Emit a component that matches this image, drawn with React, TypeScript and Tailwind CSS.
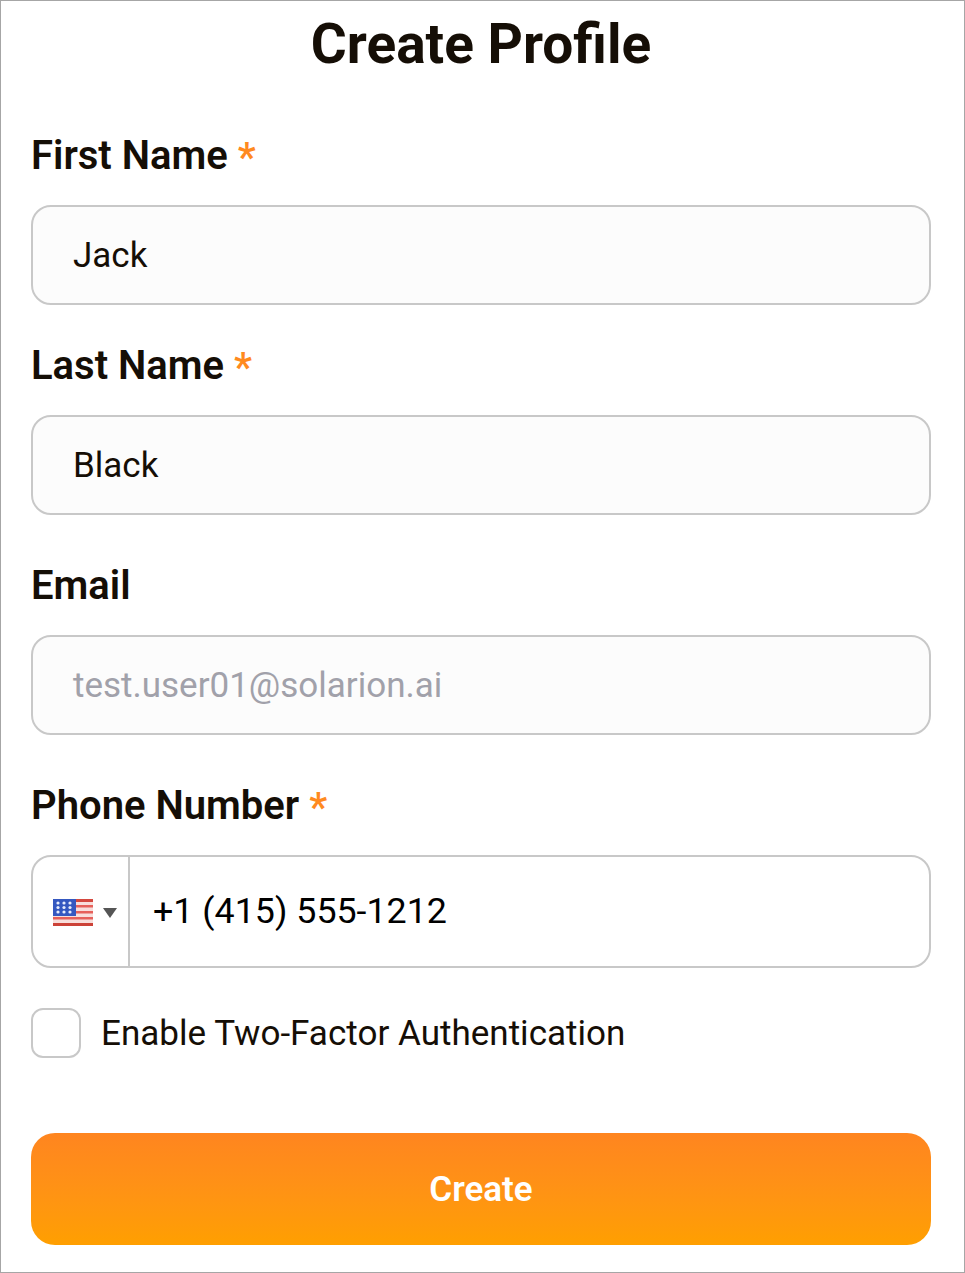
const Label = ({ text, required }: { text: string; required?: boolean }) => (
  <div className="flex h-[60px] items-center pt-[2px] text-[40px] font-semibold leading-[60px] text-[#150e06]">
    {text}
    {required && <span className="ml-[10px] mt-[4px] text-[#ff8a1f]">*</span>}
  </div>
)

const TextInput = ({ value, disabled }: { value: string; disabled?: boolean }) => (
  <div
    className={`mt-[20px] flex h-[100px] items-center rounded-[20px] border-2 border-[#c8c8c8] bg-[#fcfcfc] pl-[40px] pt-[2px] text-[35px] ${
      disabled ? 'text-[#a1a1aa]' : 'text-[#150e06]'
    }`}
  >
    {value}
  </div>
)

// low-res looking US flag, blurred like the bitmap in the picture
const UsFlag = () => (
  <svg width="40" height="27" viewBox="0 0 40 27" className="block blur-[0.6px]">
    <rect width="40" height="27" fill="#f8dedb" />
    <rect y="0" width="40" height="3" fill="#d4483f" />
    <rect y="6" width="40" height="2.5" fill="#e6605a" />
    <rect y="12" width="40" height="2.5" fill="#e6605a" />
    <rect y="18" width="40" height="2.5" fill="#e6605a" />
    <rect y="24" width="40" height="3" fill="#cc4238" />
    <rect width="23" height="17" fill="#3558c0" />
    <g fill="#e6ecfb">
      <circle cx="5" cy="4" r="1.6" />
      <circle cx="11" cy="4" r="1.6" />
      <circle cx="17" cy="4" r="1.6" />
      <circle cx="5" cy="8.5" r="1.6" />
      <circle cx="11" cy="8.5" r="1.6" />
      <circle cx="17" cy="8.5" r="1.6" />
      <circle cx="5" cy="13" r="1.6" />
      <circle cx="11" cy="13" r="1.6" />
      <circle cx="17" cy="13" r="1.6" />
    </g>
  </svg>
)

const App = () => {
  return (
    <div className="h-[1273px] w-[965px] border border-[#a6a6a6] bg-white pl-[30px] pr-[33px] font-['Roboto',sans-serif]">
      <h1 className="h-[85px] pt-[1px] text-center text-[55px] font-bold leading-[85px] text-[#150e06]">
        Create Profile
      </h1>

      <div className="mt-[39px]">
        <Label text="First Name" required />
        <TextInput value="Jack" />
      </div>

      <div className="mt-[30px]">
        <Label text="Last Name" required />
        <TextInput value="Black" />
      </div>

      <div className="mt-[40px]">
        <Label text="Email" />
        <TextInput value="test.user01@solarion.ai" disabled />
      </div>

      <div className="mt-[40px]">
        <Label text="Phone Number" required />
        <div className="mt-[20px] flex h-[113px] items-stretch rounded-[20px] border-2 border-[#c8c8c8] bg-white">
          <div className="flex w-[97px] items-center border-r-2 border-[#c8c8c8] pl-[20px] pt-[2px]">
            <UsFlag />
            <span className="ml-[10px] h-0 w-0 border-x-[7px] border-t-[10px] border-x-transparent border-t-[#555555]" />
          </div>
          <div className="flex items-center pl-[23px] text-[35.8px] text-black">+1 (415) 555-1212</div>
        </div>
      </div>

      <div className="mt-[38px] flex h-[54.5px] items-center">
        <span className="h-[50px] w-[50px] rounded-[12px] border-2 border-[#c8c8c8] bg-white" />
        <span className="ml-[20px] text-[35.05px] text-[#150e06]">Enable Two-Factor Authentication</span>
      </div>

      <button className="mt-[72px] flex h-[112px] w-full items-center justify-center rounded-[24px] bg-gradient-to-b from-[#ff851f] to-[#ff9f00] pt-[4px] text-[35px] font-semibold text-white">
        Create
      </button>
    </div>
  )
}

export default App
